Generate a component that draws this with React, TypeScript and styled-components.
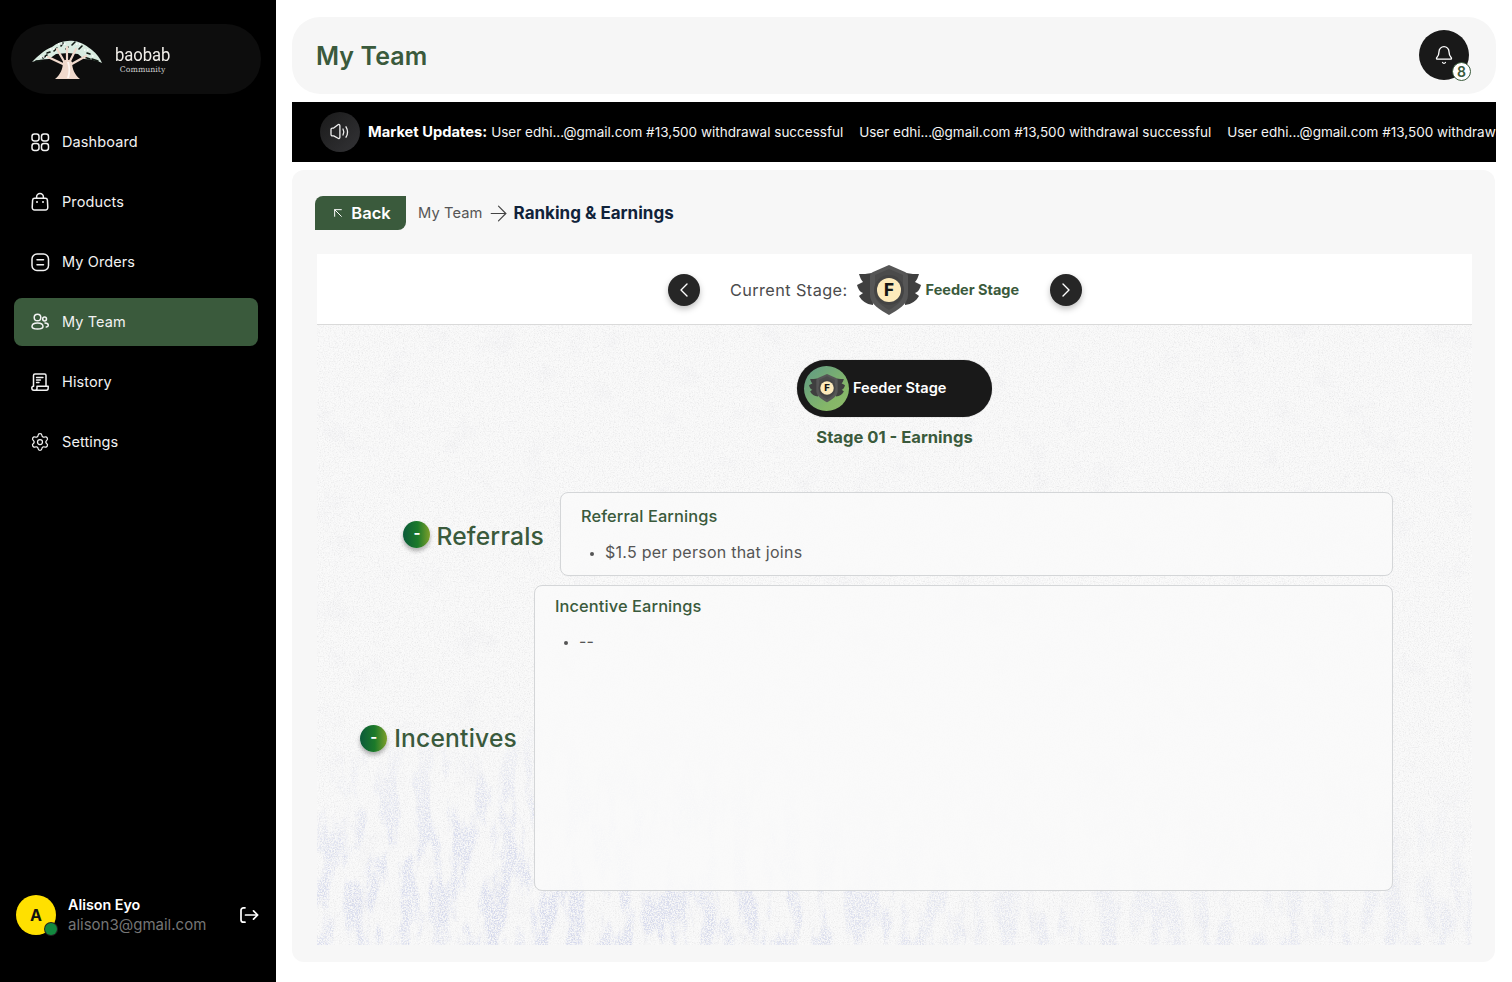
import React from "react";
import styled, { createGlobalStyle } from "styled-components";
import { Bell, ChevronLeft, ChevronRight, ArrowUpLeft, ArrowRight, Settings } from "lucide-react";

const GREEN = "#3a5a3c";
const FONT = `Inter, "Noto Sans", "Liberation Sans", sans-serif`;

const textureSvg = `<svg xmlns='http://www.w3.org/2000/svg' width='1155' height='620'>
<defs>
<filter id='n' x='0' y='0' width='100%' height='100%'><feTurbulence type='fractalNoise' baseFrequency='.8' numOctaves='3' seed='4'/><feColorMatrix values='0 0 0 0 .62 0 0 0 0 .62 0 0 0 0 .64 0 0 0 1.6 -.78'/></filter>
<filter id='b' x='0' y='0' width='100%' height='100%'>
<feTurbulence type='fractalNoise' baseFrequency='.06 .018' numOctaves='6' seed='11' result='t'/>
<feColorMatrix in='t' values='0 0 0 0 .66 0 0 0 0 .69 0 0 0 0 .84 0 0 0 6 -2.75' result='blot'/>
<feTurbulence type='fractalNoise' baseFrequency='.7' numOctaves='2' seed='3' result='g'/>
<feColorMatrix in='g' values='0 0 0 0 0 0 0 0 0 0 0 0 0 0 0 0 0 0 5 -1.9' result='grain'/>
<feComposite in='blot' in2='grain' operator='in'/>
</filter>
<filter id='s' x='0' y='0' width='100%' height='100%'>
<feTurbulence type='fractalNoise' baseFrequency='.03' numOctaves='4' seed='21'/>
<feColorMatrix values='0 0 0 0 .72 0 0 0 0 .72 0 0 0 0 .78 0 0 0 5 -3'/>
</filter>
<filter id='g' x='0' y='0' width='100%' height='100%'><feTurbulence type='fractalNoise' baseFrequency='.9' numOctaves='2' seed='7'/><feColorMatrix values='0 0 0 0 1 0 0 0 0 1 0 0 0 0 1 0 0 0 3 -1.2'/></filter>
<linearGradient id='f' x1='0' y1='0' x2='0' y2='1'><stop offset='.72' stop-color='#fff' stop-opacity='0'/><stop offset='.9' stop-color='#fff' stop-opacity='.35'/><stop offset='1' stop-color='#fff' stop-opacity='.55'/></linearGradient>
<radialGradient id='r' cx='.2' cy='1' r='.38'><stop offset='0' stop-color='#fff' stop-opacity='1'/><stop offset='.55' stop-color='#fff' stop-opacity='.8'/><stop offset='1' stop-color='#fff' stop-opacity='0'/></radialGradient>
<mask id='m'><rect width='1155' height='620' fill='url(#f)'/><rect width='1155' height='620' fill='url(#r)'/></mask>
</defs>
<rect width='1155' height='620' fill='#f7f7f7'/>
<rect width='1155' height='620' filter='url(#s)' opacity='.14'/>
<rect width='1155' height='620' filter='url(#b)' mask='url(#m)'/>
<rect width='1155' height='620' filter='url(#g)' opacity='.6'/>
<rect width='1155' height='620' filter='url(#n)' opacity='.6'/>
</svg>`;
const textureUri = `data:image/svg+xml,${encodeURIComponent(textureSvg)}`;

const Global = createGlobalStyle`
  html, body { margin: 0; padding: 0; background: #fff; }
  * { box-sizing: border-box; }
  body { font-family: ${FONT}; }
`;

const Shell = styled.div`
  display: flex;
  width: 1512px;
  height: 982px;
  overflow: hidden;
  background: #fff;
`;

const Sidebar = styled.aside`
  width: 276px;
  flex: none;
  background: #000;
  display: flex;
  flex-direction: column;
  padding: 24px 10px 47px 14px;
`;

const LogoPill = styled.div`
  width: 250px;
  height: 70px;
  margin-left: -3px;
  border-radius: 35px;
  background: #0d0d0d;
  display: flex;
  align-items: center;
  padding-left: 21px;
  gap: 10px;
`;

const LogoWords = styled.div`
  display: flex;
  flex-direction: column;
  align-items: center;
  color: #f1eee9;
  padding-top: 2px;
`;

const LogoName = styled.span`
  font-family: Roboto, sans-serif;
  font-size: 18.5px;
  line-height: 18px;
  letter-spacing: -0.1px;
  transform: scaleX(0.9);
`;

const LogoSub = styled.span`
  font-family: "DejaVu Serif", serif;
  font-size: 7.8px;
  line-height: 11px;
  color: #cfcfcf;
`;

const Nav = styled.nav`
  display: flex;
  flex-direction: column;
  gap: 12px;
  margin-top: 24px;
`;

const NavItem = styled.div<{ $active?: boolean }>`
  height: 48px;
  width: 244px;
  border-radius: 8px;
  display: flex;
  align-items: center;
  gap: 12px;
  padding-left: 16px;
  color: #f2f2f2;
  background: ${(p) => (p.$active ? GREEN : "transparent")};
  svg { width: 20px; height: 20px; flex: none; }
`;

const NavLabel = styled.span`
  font-size: 14.5px;
  letter-spacing: 0.1px;
  padding-bottom: 2px;
`;

const UserRow = styled.div`
  margin-top: auto;
  display: flex;
  align-items: center;
  margin-left: 2px;
`;

const Avatar = styled.div`
  position: relative;
  width: 40px;
  height: 40px;
  border-radius: 50%;
  background: #ffe000;
  color: #111;
  font-weight: 700;
  font-size: 16px;
  display: flex;
  align-items: center;
  justify-content: center;
  flex: none;
`;

const OnlineDot = styled.span`
  position: absolute;
  right: -1px;
  bottom: 0;
  width: 12px;
  height: 12px;
  border-radius: 50%;
  background: #12893f;
  box-shadow: 0 0 0 1px #222;
`;

const UserText = styled.div`
  margin-left: 12px;
  display: flex;
  flex-direction: column;
  gap: 1px;
  width: 171px;
`;

const UserName = styled.span`
  color: #fff;
  font-size: 14.3px;
  line-height: 19px;
  font-weight: 600;
`;

const UserMail = styled.span`
  color: #757575;
  font-size: 15px;
  line-height: 20px;
`;

const Main = styled.main`
  width: 1204px;
  margin-left: 16px;
  padding-top: 17px;
  display: flex;
  flex-direction: column;
`;

const Header = styled.header`
  height: 77px;
  border-radius: 28px;
  background: #f6f6f6;
  display: flex;
  align-items: center;
  justify-content: space-between;
  padding: 0 27px 0 24px;
`;

const PageTitle = styled.h1`
  margin: 0;
  color: ${GREEN};
  font-size: 25px;
  font-weight: 600;
  letter-spacing: 0.1px;
`;

const BellButton = styled.div`
  position: relative;
  width: 50px;
  height: 50px;
  margin-bottom: 1px;
  border-radius: 50%;
  background: #191919;
  color: #fff;
  display: flex;
  align-items: center;
  justify-content: center;
  svg { margin-top: -1px; }
`;

const BellCount = styled.span`
  position: absolute;
  right: -2px;
  bottom: -1px;
  width: 19px;
  height: 19px;
  border-radius: 50%;
  background: #fff;
  border: 1.5px solid ${GREEN};
  color: ${GREEN};
  font-size: 14px;
  font-weight: 600;
  display: flex;
  align-items: center;
  justify-content: center;
`;

const Ticker = styled.section`
  margin-top: 8px;
  height: 60px;
  background: #000;
  color: #fff;
  display: flex;
  align-items: center;
  padding-left: 28px;
  overflow: hidden;
  white-space: nowrap;
`;

const SpeakerDisc = styled.div`
  width: 40px;
  height: 40px;
  border-radius: 50%;
  background: linear-gradient(135deg, #1a1a1a, #333336);
  display: flex;
  align-items: center;
  justify-content: center;
  flex: none;
  margin-right: 8px;
`;

const TickerLabel = styled.strong`
  font-size: 14.7px;
  font-weight: 700;
  margin-right: 4px;
`;

const TickerItem = styled.span`
  font-size: 13.5px;
  margin-right: 16px;
  color: #f4f4f4;
`;

const Content = styled.section`
  margin-top: 8px;
  width: 1203px;
  height: 792px;
  border-radius: 12px;
  background: #f7f7f7;
  padding: 26px 23px 17px 25px;
  display: flex;
  flex-direction: column;
`;

const Crumbs = styled.div`
  display: flex;
  align-items: center;
  height: 34px;
  margin-left: -2px;
`;

const BackButton = styled.button`
  width: 91px;
  height: 34px;
  border: 0;
  border-radius: 8px 0 8px 0;
  background: ${GREEN};
  color: #fff;
  font-family: ${FONT};
  font-size: 16.5px;
  font-weight: 600;
  display: flex;
  align-items: center;
  justify-content: center;
  gap: 5px;
  margin-right: 12px;
  padding: 0;
`;

const CrumbLink = styled.span`
  color: #555;
  font-size: 14.7px;
  letter-spacing: 0.1px;
  margin-right: 3px;
`;

const CrumbNow = styled.span`
  color: #10233a;
  font-size: 17px;
  font-weight: 700;
  margin-left: 3px;
`;

const StageBar = styled.div`
  margin-top: 24px;
  height: 71px;
  background: #fff;
  border-bottom: 1px solid #dadada;
  display: flex;
  align-items: center;
  padding: 2px 0 0 351px;
`;

const RoundNav = styled.div`
  width: 32px;
  height: 32px;
  border-radius: 50%;
  background: #262626;
  color: #fff;
  display: flex;
  align-items: center;
  justify-content: center;
  box-shadow: 0 3px 6px rgba(0, 0, 0, 0.25);
  flex: none;
`;

const StageLabel = styled.span`
  color: #4c4c4c;
  font-size: 16.3px;
  margin-left: 30px;
  margin-right: 9px;
  letter-spacing: 0.4px;
  white-space: nowrap;
`;

const StageName = styled.span`
  color: ${GREEN};
  font-size: 14.5px;
  font-weight: 700;
  margin: 0 30px 2px 5px;
  width: 94px;
  white-space: nowrap;
`;

const Textured = styled.div`
  flex: 1;
  background: #f7f7f7 url("${textureUri}") top left / 100% 100% no-repeat;
  display: flex;
  flex-direction: column;
  align-items: center;
  padding: 35px 79px 54px 0;
`;

const StagePill = styled.div`
  width: 195px;
  height: 57px;
  margin-left: 79px;
  border-radius: 29px;
  background: #191919;
  box-shadow: 0 0 1px rgba(0,0,0,.5);
  color: #fff;
  display: flex;
  align-items: center;
  padding-left: 7px;
  gap: 4px;
`;

const PillText = styled.span`
  font-size: 14.6px;
  font-weight: 600;
  padding-bottom: 2px;
`;

const PillDisc = styled.div`
  width: 45px;
  height: 45px;
  border-radius: 50%;
  background: linear-gradient(135deg, #5f9a86, #85b768 70%, #8cb96a);
  display: flex;
  align-items: center;
  justify-content: center;
`;

const StageTitle = styled.h2`
  margin: 10px 0 0 79px;
  color: ${GREEN};
  font-size: 16.6px;
  line-height: 20px;
  font-weight: 700;
`;

const Rows = styled.div`
  align-self: stretch;
  margin-top: 45px;
  display: flex;
  flex-direction: column;
  gap: 9px;
`;

const EarningRow = styled.div<{ $gap: number }>`
  display: flex;
  justify-content: flex-end;
  align-items: center;
  gap: ${(p) => p.$gap}px;
`;

const RowLabel = styled.div<{ $gap: number }>`
  display: flex;
  align-items: center;
  gap: ${(p) => p.$gap}px;
`;

const RowText = styled.span<{ $drop?: number }>`
  color: ${GREEN};
  font-size: 24.6px;
  font-weight: 500;
  letter-spacing: 0.2px;
  padding-top: ${(p) => p.$drop ?? 0}px;
`;

const Dot = styled.span`
  width: 27px;
  height: 27px;
  border-radius: 50%;
  background: linear-gradient(90deg, #0b5a3a, #1c7a2a 55%, #7e9f2b);
  box-shadow: 0 3px 4px rgba(0, 0, 0, 0.3);
  color: #fff;
  font-size: 15px;
  font-weight: 700;
  line-height: 24px;
  text-align: center;
  flex: none;
`;

const EarnCard = styled.div<{ $w: number; $h: number; $pt: number }>`
  width: ${(p) => p.$w}px;
  height: ${(p) => p.$h}px;
  flex: none;
  border: 1px solid #d4d6d8;
  border-radius: 8px;
  background: rgba(250, 250, 250, 0.9);
  padding: ${(p) => p.$pt}px 20px 12px;
`;

const EarnTitle = styled.h3`
  margin: 0;
  color: ${GREEN};
  font-size: 16.4px;
  line-height: 22px;
  font-weight: 500;
  letter-spacing: 0.1px;
`;

const EarnList = styled.ul<{ $gap: number }>`
  margin: ${(p) => p.$gap}px 0 0;
  padding: 0 0 0 24px;
  color: #555;
  font-size: 16px;
  line-height: 22px;
  letter-spacing: 0.25px;
  li::marker { font-size: 12px; }
`;

const Tree = () => (
  <svg width="70" height="42" viewBox="0 0 70 42" aria-hidden="true">
    <path d="M0 24C6 18 12 12 20 9c6-5 14-7 22-6 8 1 14 6 18 9 5 4 8 8 10 13-6-3-12-4-18-4l-6-5-10-1-12 1-7 5C11 21 5 22 0 24z" fill="#d9ece1" />
    <path d="M4 23h5M11 20l4-3M52 19l6 2M60 21l6 2M22 13l3-3M29 8l2-3M40 7l3-3M47 11l3-3M34 11l2-2M55 15l3 1M15 15l3-1" stroke="#121a14" strokeWidth="1.6" strokeLinecap="round" />
    <path d="M8 19h8M18 11h6M26 6h8M44 6h6M52 12h5M60 18h3" stroke="#ffffff" strokeWidth="1.4" strokeDasharray="1.5 1.5" />
    <path d="M33 27 16 19M38 27l16-9M33 25 25 11M37 25l7-14M35 24V9" stroke="#f0d9cc" strokeWidth="2.2" strokeLinecap="round" fill="none" />
    <path d="M23 41c5-4 8-10 8-17l2-2h5l2 2c0 7 3 13 8 17z" fill="#f0d9cc" />
    <path d="M35 24c2 5 2 11 0 16h2c2-6 1-12 0-16z" fill="#fff7f2" />
  </svg>
);

const StageBadge = ({ size, fsize }: { size: number; fsize: number }) => (
  <svg width={size} height={(size * 50) / 64} viewBox="0 0 64 50" aria-hidden="true">
    <g fill="#3f3f3f">
      <path d="M15 8C10 9 6 9 2 9c1 3 2 6 4 8-2 1-4 2-6 3 1 4 3 7 6 8-1 1-3 2-4 3 3 5 7 8 14 9z" />
      <path d="M49 8c5 1 9 1 13 1-1 3-2 6-4 8 2 1 4 2 6 3-1 4-3 7-6 8 1 1 3 2 4 3-3 5-7 8-14 9z" />
    </g>
    <path d="M32 0 48 7c2 1 3 2 3 4v19c0 9-10 15-19 20-9-5-19-11-19-20V11c0-2 1-3 3-4z" fill="#565656" />
    <path d="M32 4 46 10v20c0 6-7 11-14 15-7-4-14-9-14-15V10z" fill="#4b4b4b" />
    <circle cx="32" cy="25" r="15" fill="#444" />
    <circle cx="32" cy="25" r="12" fill="#fdeabb" />
    <text x="32" y="31" textAnchor="middle" fontFamily="Inter, sans-serif" fontWeight="800" fontSize={fsize} fill="#161616">F</text>
  </svg>
);

const s = { fill: "none", stroke: "currentColor", strokeWidth: 1.5, strokeLinecap: "round" as const, strokeLinejoin: "round" as const };

const IconGrid = () => (
  <svg viewBox="0 0 20 20" {...s}>
    <rect x="2" y="2" width="7" height="7" rx="2.4" /><rect x="11.5" y="2" width="7" height="7" rx="2.4" />
    <rect x="2" y="11.5" width="7" height="7" rx="2.4" /><rect x="11.5" y="11.5" width="7" height="7" rx="2.4" />
  </svg>
);
const IconBag = () => (
  <svg viewBox="0 0 20 20" {...s}>
    <path d="M4.6 6.300h10.800c1 0 1.900.8 2 1.800l.4 7.300c.1 1.400-1 2.600-2.400 2.600H4.600c-1.400 0-2.500-1.200-2.400-2.600l.4-7.300c.1-1 1-1.800 2-1.800z" />
    <path d="M6.600 6.300V5a3.400 3.400 0 0 1 6.800 0v1.300" />
    <path d="M7 10h.01M13 10h.01" strokeWidth="2" />
  </svg>
);
const IconOrders = () => (
  <svg viewBox="0 0 20 20" {...s}>
    <rect x="2" y="2" width="16.5" height="16.5" rx="5" />
    <path d="M7 7.700h6.500M7 12.700h6.500" />
  </svg>
);
const IconTeam = () => (
  <svg viewBox="0 0 20 20" {...s}>
    <circle cx="7.500" cy="5.500" r="3.300" />
    <path d="M2 14.600c0-2.200 2.400-3.600 5.500-3.600s5.500 1.400 5.500 3.600-2.400 2.500-5.500 2.500S2 16.800 2 14.600z" />
    <circle cx="14.600" cy="7" r="1.900" />
    <path d="M15 11c1.800.1 3.300.9 3.300 2.300 0 1-.8 1.600-2 1.800" />
  </svg>
);
const IconHistory = () => (
  <svg viewBox="0 0 20 20" {...s}>
    <path d="M3.500 14V3.500c0-.9.700-1.500 1.500-1.500h9.500c.8 0 1.500.6 1.500 1.500V14" />
    <path d="M3.500 14.200c-1 0-1.700.7-1.700 1.900s.7 2.100 2 2.100h12.700c1 0 1.700-.8 1.700-2.100v-1.900H7v2c0 1.200-.9 2-1.800 2" />
    <path d="M6.500 5.500h6.500M6.500 8h4M6.500 10.500h2.500" strokeWidth="1.300" />
  </svg>
);
const IconLogout = () => (
  <svg width="20" height="20" viewBox="0 0 20 20" {...s} strokeWidth={1.7} style={{ color: "#fff", flex: "none" }}>
    <path d="M6 2.800H4.500C3 2.800 2 3.800 2 5.300v9.400c0 1.500 1 2.500 2.500 2.500H6" />
    <path d="M6.500 10h12M14.500 5.800 18.700 10l-4.200 4.200" />
  </svg>
);
const IconSpeaker = () => (
  <svg width="22" height="22" viewBox="0 0 22 22" {...s} strokeWidth={1.3} style={{ color: "#f0f0f0" }}>
    <path d="M2 8.500c0-.8.600-1.400 1.400-1.400h1.300l4.300-3.400c.8-.6 1.900-.1 1.900 1v11.600c0 1.100-1.100 1.600-1.900 1L4.700 14.900H3.400C2.600 14.900 2 14.300 2 13.500z" />
    <path d="M14 8c1 1.800 1 4.200 0 6M17 5.800c1.800 3 1.800 7.400 0 10.400" />
  </svg>
);

const NAV = [
  { label: "Dashboard", icon: <IconGrid /> },
  { label: "Products", icon: <IconBag /> },
  { label: "My Orders", icon: <IconOrders /> },
  { label: "My Team", icon: <IconTeam />, active: true },
  { label: "History", icon: <IconHistory /> },
  { label: "Settings", icon: <Settings strokeWidth={1.5} /> },
];

const MSG = "User edhi...@gmail.com #13,500 withdrawal successful";

export default function App() {
  return (
    <>
      <Global />
      <Shell>
        <Sidebar>
          <LogoPill>
            <Tree />
            <LogoWords>
              <LogoName>baobab</LogoName>
              <LogoSub>Community</LogoSub>
            </LogoWords>
          </LogoPill>
          <Nav>
            {NAV.map((n) => (
              <NavItem key={n.label} $active={n.active}>
                {n.icon}
                <NavLabel>{n.label}</NavLabel>
              </NavItem>
            ))}
          </Nav>
          <UserRow>
            <Avatar>
              A
              <OnlineDot />
            </Avatar>
            <UserText>
              <UserName>Alison Eyo</UserName>
              <UserMail>alison3@gmail.com</UserMail>
            </UserText>
            <IconLogout />
          </UserRow>
        </Sidebar>
        <Main>
          <Header>
            <PageTitle>My Team</PageTitle>
            <BellButton>
              <Bell size={20} strokeWidth={1.6} />
              <BellCount>8</BellCount>
            </BellButton>
          </Header>
          <Ticker>
            <SpeakerDisc>
              <IconSpeaker />
            </SpeakerDisc>
            <TickerLabel>Market Updates:</TickerLabel>
            <TickerItem>{MSG}</TickerItem>
            <TickerItem>{MSG}</TickerItem>
            <TickerItem>{MSG}</TickerItem>
          </Ticker>
          <Content>
            <Crumbs>
              <BackButton>
                <ArrowUpLeft size={16} strokeWidth={1.5} />
                Back
              </BackButton>
              <CrumbLink>My Team</CrumbLink>
              <ArrowRight size={25} strokeWidth={1.1} color="#444" />
              <CrumbNow>Ranking &amp; Earnings</CrumbNow>
            </Crumbs>
            <StageBar>
              <RoundNav>
                <ChevronLeft size={24} strokeWidth={1.4} />
              </RoundNav>
              <StageLabel>Current Stage:</StageLabel>
              <StageBadge size={64} fsize={17} />
              <StageName>Feeder Stage</StageName>
              <RoundNav>
                <ChevronRight size={24} strokeWidth={1.4} />
              </RoundNav>
            </StageBar>
            <Textured>
              <StagePill>
                <PillDisc>
                  <StageBadge size={36} fsize={17} />
                </PillDisc>
                <PillText>Feeder Stage</PillText>
              </StagePill>
              <StageTitle>Stage 01 - Earnings</StageTitle>
              <Rows>
                <EarningRow $gap={16}>
                  <RowLabel $gap={6}>
                    <Dot>-</Dot>
                    <RowText $drop={4}>Referrals</RowText>
                  </RowLabel>
                  <EarnCard $w={833} $h={84} $pt={12}>
                    <EarnTitle>Referral Earnings</EarnTitle>
                    <EarnList $gap={14}>
                      <li>$1.5 per person that joins</li>
                    </EarnList>
                  </EarnCard>
                </EarningRow>
                <EarningRow $gap={17}>
                  <RowLabel $gap={7}>
                    <Dot>-</Dot>
                    <RowText>Incentives</RowText>
                  </RowLabel>
                  <EarnCard $w={859} $h={306} $pt={9}>
                    <EarnTitle>Incentive Earnings</EarnTitle>
                    <EarnList $gap={13}>
                      <li>--</li>
                    </EarnList>
                  </EarnCard>
                </EarningRow>
              </Rows>
            </Textured>
          </Content>
        </Main>
      </Shell>
    </>
  );
}
